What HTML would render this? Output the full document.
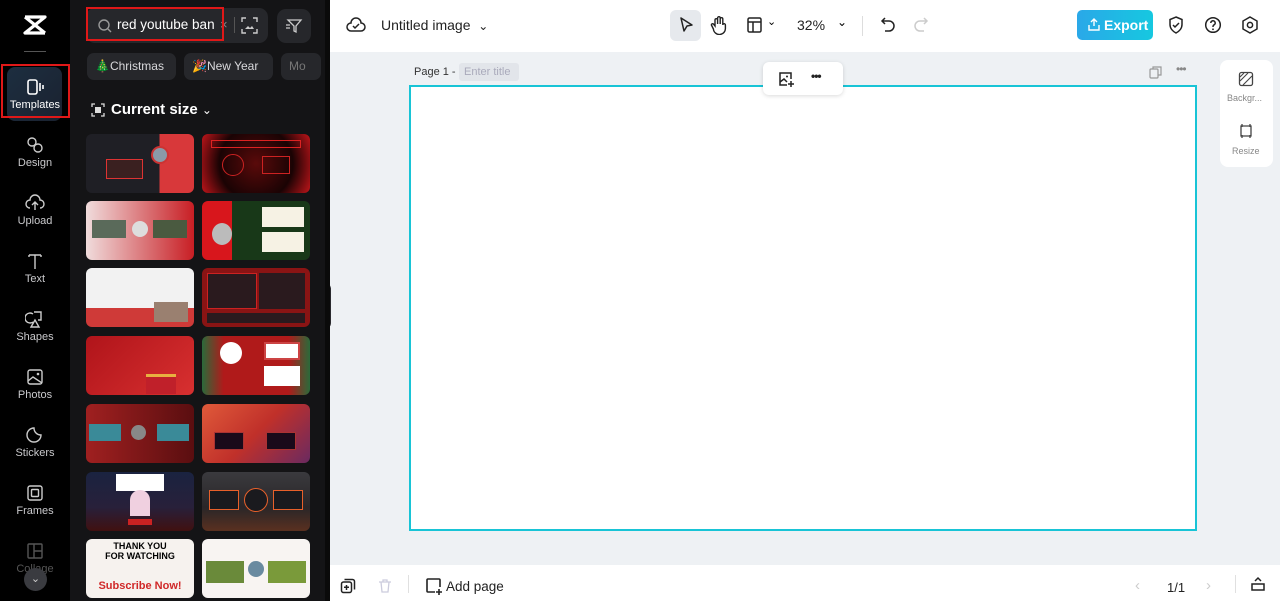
<!DOCTYPE html>
<html><head><meta charset="utf-8"><style>
*{box-sizing:border-box;margin:0;padding:0}
body{width:1280px;height:601px;overflow:hidden;font-family:"Liberation Sans",sans-serif;background:#eef1f4;position:relative}
.abs{position:absolute}
#side{left:0;top:0;width:70px;height:601px;background:#000}
.nav{position:absolute;left:0;width:70px;text-align:center;color:#c9c9cc;font-size:11px}
.nav svg{display:block;margin:0 auto 3px}
#panel{left:70px;top:0;width:256px;height:601px;background:#141416}
.chip{position:absolute;top:53px;height:27px;border-radius:7px;background:#26272b;color:#d9d9dc;font-size:12px;line-height:27px;padding-left:8px}
.th{position:absolute;width:108px;height:59px;border-radius:6px;overflow:hidden}
.th i{position:absolute;display:block}
#top{left:326px;top:0;width:954px;height:52px;background:#fff}
#bot{left:326px;top:565px;width:954px;height:36px;background:#fff}
.ic{position:absolute}
</style></head><body>
<div id="side" class="abs">
 <svg class="ic" style="left:22px;top:14px" width="26" height="22" viewBox="0 0 26 22"><path d="M3 3h20L3 19h20M3 3l20 16" stroke="#fff" stroke-width="3.2" fill="none" stroke-linejoin="round"/></svg>
 <div class="abs" style="left:24px;top:51px;width:22px;height:1px;background:#555"></div>
 <div class="abs" style="left:7px;top:67px;width:55px;height:54px;border-radius:8px;background:linear-gradient(135deg,#1d2e40,#1a2230)"></div>
 <div class="abs" style="left:1px;top:64px;width:69px;height:54px;border:2px solid #e01818"></div>
 <div class="nav" style="top:78px;color:#fff"><svg width="20" height="18" viewBox="0 0 20 18"><rect x="3" y="2" width="9" height="14" rx="2" fill="none" stroke="#fff" stroke-width="1.6"/><path d="M15 5v8M18 7v4" stroke="#fff" stroke-width="1.6"/></svg>Templates</div>
 <div class="nav" style="top:136px"><svg width="20" height="18" viewBox="0 0 20 18"><circle cx="7" cy="6" r="4" fill="none" stroke="#ccc" stroke-width="1.4"/><circle cx="13" cy="12" r="4" fill="none" stroke="#ccc" stroke-width="1.4"/></svg>Design</div>
 <div class="nav" style="top:194px"><svg width="20" height="18" viewBox="0 0 20 18"><path d="M5 14a4 4 0 0 1 0-8 5 5 0 0 1 10 0 4 4 0 0 1 0 8M10 16V8M7 11l3-3 3 3" fill="none" stroke="#ccc" stroke-width="1.4"/></svg>Upload</div>
 <div class="nav" style="top:252px"><svg width="20" height="18" viewBox="0 0 20 18"><path d="M4 3h12M10 3v14M4 3v2M16 3v2" fill="none" stroke="#ccc" stroke-width="1.4"/></svg>Text</div>
 <div class="nav" style="top:310px"><svg width="20" height="18" viewBox="0 0 20 18"><path d="M8 4a5 5 0 1 0 0 8M9 2h7v8h-3M6 17l4-7 4 7z" fill="none" stroke="#ccc" stroke-width="1.4"/></svg>Shapes</div>
 <div class="nav" style="top:368px"><svg width="20" height="18" viewBox="0 0 20 18"><rect x="3" y="2" width="14" height="14" rx="2" fill="none" stroke="#ccc" stroke-width="1.4"/><path d="M3 13l5-4 9 6" fill="none" stroke="#ccc" stroke-width="1.4"/><circle cx="13" cy="6" r="1.3" fill="#ccc"/></svg>Photos</div>
 <div class="nav" style="top:426px"><svg width="20" height="18" viewBox="0 0 20 18"><path d="M16 9a7 7 0 1 1-7-7c0 4 3 7 7 7z" fill="none" stroke="#ccc" stroke-width="1.4"/></svg>Stickers</div>
 <div class="nav" style="top:484px"><svg width="20" height="18" viewBox="0 0 20 18"><rect x="3" y="2" width="14" height="14" rx="2" fill="none" stroke="#ccc" stroke-width="1.4"/><rect x="6.5" y="5.5" width="7" height="7" rx="1" fill="none" stroke="#ccc" stroke-width="1.4"/></svg>Frames</div>
 <div class="nav" style="top:542px;color:#555"><svg width="20" height="18" viewBox="0 0 20 18"><rect x="3" y="2" width="14" height="14" rx="1" fill="none" stroke="#555" stroke-width="1.4"/><path d="M9 2v14M9 9h8" stroke="#555" stroke-width="1.4"/></svg>Collage</div>
 <div class="abs" style="left:24px;top:568px;width:23px;height:23px;border-radius:50%;background:#3a3b40;color:#ccc;font-size:11px;text-align:center;line-height:22px">&#8964;</div>
</div>
<div id="panel" class="abs">
 <div class="abs" style="left:16px;top:8px;width:182px;height:35px;border-radius:9px;background:#26272b"></div>
 <svg class="ic" style="left:27px;top:18px" width="16" height="16" viewBox="0 0 16 16"><circle cx="7" cy="7" r="5" fill="none" stroke="#999" stroke-width="1.4"/><path d="M11 11l3 3" stroke="#999" stroke-width="1.4"/></svg>
 <div class="abs" style="left:47px;top:17px;color:#fff;font-size:13.5px">red youtube ban</div>
 <div class="abs" style="left:150px;top:17px;color:#888;font-size:13px">×</div>
 <div class="abs" style="left:164px;top:17px;width:1px;height:16px;background:#555"></div>
 <svg class="ic" style="left:171px;top:17px" width="17" height="17" viewBox="0 0 17 17"><path d="M1 5V1h4M12 1h4v4M16 12v4h-4M5 16H1v-4" fill="none" stroke="#ccc" stroke-width="1.4"/><path d="M4 12l3-3 2 2 2-2 2 3z" fill="#ccc"/></svg>
 <div class="abs" style="left:16px;top:7px;width:138px;height:34px;border:2px solid #e01818"></div>
 <div class="abs" style="left:207px;top:9px;width:34px;height:34px;border-radius:9px;background:#26272b"></div>
 <svg class="ic" style="left:215px;top:17px" width="18" height="18" viewBox="0 0 18 18"><path d="M3 3h13l-5 6v6l-2-1V9z M1 8h4M1 11h4" fill="none" stroke="#ccc" stroke-width="1.3"/></svg>
 <div class="chip" style="left:17px;width:89px">🎄Christmas</div>
 <div class="chip" style="left:114px;width:89px">🎉New Year</div>
 <div class="chip" style="left:211px;width:40px;color:#777">Mo</div>
 <svg class="ic" style="left:21px;top:103px" width="14" height="14" viewBox="0 0 14 14"><path d="M1 4V1h3M10 1h3v3M13 10v3h-3M4 13H1v-3" fill="none" stroke="#ddd" stroke-width="1.3"/><rect x="4" y="4" width="6" height="6" fill="#ddd"/></svg>
 <div class="abs" style="left:41px;top:101px;color:#fff;font-size:15px;font-weight:bold">Current size <span style="font-weight:normal;font-size:12px">&#8964;</span></div>
 <div class="th" style="left:16px;top:134px;background:linear-gradient(90deg,#1f1f25 0 68%,#d8383a 68%)"><i style="left:20px;top:25px;width:37px;height:20px;background:#3a2020;border:1px solid #d33"></i><i style="left:65px;top:12px;width:18px;height:18px;border-radius:50%;background:#8a9aa8;border:2px solid #c33"></i></div>
 <div class="th" style="left:132px;top:134px;background:radial-gradient(circle at 50% 50%,#5a0a0a,#1a0304 60%,#c0151a)"><i style="left:9px;top:6px;width:90px;height:8px;border:1px solid #d22"></i><i style="left:20px;top:20px;width:22px;height:22px;border-radius:50%;border:1px solid #c22"></i><i style="left:60px;top:22px;width:28px;height:18px;border:1px solid #c22"></i></div>
 <div class="th" style="left:16px;top:201px;background:linear-gradient(90deg,#f0dcdc,#c81e24)"><i style="left:6px;top:19px;width:34px;height:18px;background:#5a6a5a"></i><i style="left:67px;top:19px;width:34px;height:18px;background:#4a5a40"></i><i style="left:46px;top:20px;width:16px;height:16px;border-radius:50%;background:#ddd"></i></div>
 <div class="th" style="left:132px;top:201px;background:linear-gradient(90deg,#d8161c 0 28%,#183818 28%)"><i style="left:60px;top:6px;width:42px;height:20px;background:#f6f2e4"></i><i style="left:60px;top:31px;width:42px;height:20px;background:#f6f2e4"></i><i style="left:10px;top:22px;width:20px;height:22px;border-radius:50%;background:#bbb"></i></div>
 <div class="th" style="left:16px;top:268px;background:linear-gradient(180deg,#f2f2f2 0 68%,#cf3a38 68%)"><i style="left:68px;top:34px;width:34px;height:20px;background:#9a8070"></i></div>
 <div class="th" style="left:132px;top:268px;background:#8a1414"><i style="left:5px;top:5px;width:50px;height:36px;background:#2a1a1e;border:1px solid #c22"></i><i style="left:57px;top:5px;width:46px;height:36px;background:#2a1a1e"></i><i style="left:5px;top:45px;width:98px;height:10px;background:#2a1a1e"></i></div>
 <div class="th" style="left:16px;top:336px;background:linear-gradient(135deg,#b0141a,#d83030)"><i style="left:60px;top:38px;width:30px;height:20px;background:#c0202a;border-top:3px solid #e8b040"></i></div>
 <div class="th" style="left:132px;top:336px;background:linear-gradient(90deg,#2b6a3a,#b01a1a 20%,#b01a1a 80%,#2b6a3a)"><i style="left:18px;top:6px;width:22px;height:22px;border-radius:50%;background:#fff"></i><i style="left:62px;top:6px;width:36px;height:18px;background:#fff;border:2px solid #c44"></i><i style="left:62px;top:30px;width:36px;height:20px;background:#fff"></i></div>
 <div class="th" style="left:16px;top:404px;background:linear-gradient(90deg,#a02020,#5a0e10)"><i style="left:3px;top:20px;width:32px;height:17px;background:#3a8a98"></i><i style="left:71px;top:20px;width:32px;height:17px;background:#3a8a98"></i><i style="left:45px;top:21px;width:15px;height:15px;border-radius:50%;background:#888"></i></div>
 <div class="th" style="left:132px;top:404px;background:linear-gradient(135deg,#e05a3a,#c0302a 50%,#6a2a60)"><i style="left:12px;top:28px;width:30px;height:18px;background:#1a0a1a;border:1px solid #a33"></i><i style="left:64px;top:28px;width:30px;height:18px;background:#1a0a1a;border:1px solid #a33"></i></div>
 <div class="th" style="left:16px;top:472px;background:linear-gradient(180deg,#1a2340,#28203a 60%,#401010)"><i style="left:30px;top:2px;width:48px;height:17px;background:#fff"></i><i style="left:44px;top:18px;width:20px;height:26px;border-radius:10px 10px 0 0;background:#f0d0e0"></i><i style="left:42px;top:47px;width:24px;height:6px;background:#c22"></i></div>
 <div class="th" style="left:132px;top:472px;background:linear-gradient(180deg,#3a3a3e,#2a2628 60%,#5a3020)"><i style="left:7px;top:18px;width:30px;height:20px;background:#1a1a1e;border:1px solid #e8602a"></i><i style="left:42px;top:16px;width:24px;height:24px;border-radius:50%;background:#1a1a1e;border:1px solid #e8602a"></i><i style="left:71px;top:18px;width:30px;height:20px;background:#1a1a1e;border:1px solid #e8602a"></i></div>
 <div class="th" style="left:16px;top:539px;background:#f6f2ee"><div style="position:absolute;left:0;right:0;bottom:4px;height:14px;text-align:center;color:#d02828;font-size:11px;font-weight:bold">Subscribe Now!</div><div style="position:absolute;top:2px;width:100%;text-align:center;font-size:9px;font-weight:bold">THANK YOU<br>FOR WATCHING</div></div>
 <div class="th" style="left:132px;top:539px;background:#f8f4f2"><div style="position:absolute;left:4px;top:22px;width:38px;height:22px;background:#6a8a3a"></div><div style="position:absolute;right:4px;top:22px;width:38px;height:22px;background:#7a9a3a"></div><i style="left:46px;top:22px;width:16px;height:16px;border-radius:50%;background:#6a8aa0"></i></div>
 <div class="abs" style="left:255px;top:283px;width:6px;height:46px;border-radius:0 6px 6px 0;background:#2a2a2e"></div>
</div>
<div class="abs" style="left:325px;top:0;width:5px;height:601px;background:#0a0a0a"></div>
<div id="top" class="abs" style="left:330px;width:950px">
 <svg class="ic" style="left:16px;top:16px" width="20" height="18" viewBox="0 0 20 18"><path d="M5 15a4 4 0 0 1 0-8 5 5 0 0 1 10 0 4 4 0 0 1 0 8z M7 10l2 2 4-4" fill="none" stroke="#222" stroke-width="1.5"/></svg>
 <div class="abs" style="left:51px;top:17px;font-size:14px;color:#222">Untitled image &nbsp;<span style="font-size:12px">&#8964;</span></div>
 <div class="abs" style="left:340px;top:10px;width:31px;height:31px;border-radius:6px;background:#e6e9ed"></div>
 <svg class="ic" style="left:348px;top:16px" width="16" height="18" viewBox="0 0 16 18"><path d="M3 2l11 7-5 1-3 5z" fill="none" stroke="#222" stroke-width="1.5" stroke-linejoin="round"/></svg>
 <svg class="ic" style="left:380px;top:15px" width="18" height="20" viewBox="0 0 18 20"><path d="M5 11V5a1.3 1.3 0 0 1 2.6 0v4V3a1.3 1.3 0 0 1 2.6 0v6V4a1.3 1.3 0 0 1 2.6 0v6a1.3 1.3 0 0 1 2.6 0v3a6 6 0 0 1-12 1l-2-4a1.2 1.2 0 0 1 2-1z" fill="none" stroke="#222" stroke-width="1.4"/></svg>
 <svg class="ic" style="left:416px;top:16px" width="18" height="18" viewBox="0 0 18 18"><rect x="2" y="2" width="13" height="14" rx="1.5" fill="none" stroke="#222" stroke-width="1.5"/><path d="M2 6h13M7 6v10" stroke="#222" stroke-width="1.5"/></svg>
 <div class="abs" style="left:437px;top:15px;font-size:11px">&#8964;</div>
 <div class="abs" style="left:467px;top:17px;font-size:14px;color:#222">32%</div>
 <div class="abs" style="left:507px;top:15px;font-size:12px">&#8964;</div>
 <div class="abs" style="left:532px;top:16px;width:1px;height:20px;background:#ddd"></div>
 <svg class="ic" style="left:549px;top:16px" width="18" height="18" viewBox="0 0 18 18"><path d="M6 2L3 5l3 3M3 5h7a5 5 0 0 1 0 10H6" fill="none" stroke="#222" stroke-width="1.5"/></svg>
 <svg class="ic" style="left:582px;top:16px" width="18" height="18" viewBox="0 0 18 18"><path d="M12 2l3 3-3 3M15 5H8a5 5 0 0 0 0 10h4" fill="none" stroke="#ccc" stroke-width="1.5"/></svg>
 <div class="abs" style="left:747px;top:10px;width:76px;height:30px;border-radius:5px;background:linear-gradient(90deg,#2aa8e8,#16c8e0);color:#fff;font-size:14px;font-weight:bold;line-height:30px;padding-left:27px">Export</div>
 <svg class="ic" style="left:758px;top:17px" width="12" height="14" viewBox="0 0 12 14"><path d="M6 9V2M3 5l3-3 3 3M1 8v5h10V8" fill="none" stroke="#fff" stroke-width="1.4"/></svg>
 <svg class="ic" style="left:837px;top:15px" width="18" height="20" viewBox="0 0 18 20"><path d="M9 2l6 2.5v5c0 4-3 7-6 8.5-3-1.5-6-4.5-6-8.5v-5z M6 10l2 2 4-4" fill="none" stroke="#222" stroke-width="1.5"/></svg>
 <svg class="ic" style="left:874px;top:16px" width="18" height="18" viewBox="0 0 18 18"><circle cx="9" cy="9" r="7.3" fill="none" stroke="#222" stroke-width="1.5"/><path d="M6.8 7a2.2 2.2 0 1 1 3 2c-.8.4-.8 1-.8 2" fill="none" stroke="#222" stroke-width="1.5"/><circle cx="9" cy="13.3" r=".9" fill="#222"/></svg>
 <svg class="ic" style="left:911px;top:15px" width="18" height="20" viewBox="0 0 18 20"><path d="M9 2l7 4v8l-7 4-7-4V6z" fill="none" stroke="#222" stroke-width="1.5"/><circle cx="9" cy="10" r="2.6" fill="none" stroke="#222" stroke-width="1.5"/></svg>
</div>
<div class="abs" style="left:414px;top:66px;font-size:11px;color:#333">Page 1 -</div>
<div class="abs" style="left:459px;top:63px;width:60px;height:18px;border-radius:3px;background:#e2e5ea;color:#aab;font-size:11px;line-height:18px;padding-left:5px">Enter title</div>
<svg class="ic" style="left:1149px;top:66px" width="13" height="13" viewBox="0 0 13 13"><rect x="1" y="3" width="8" height="9" rx="1" fill="none" stroke="#999" stroke-width="1.2"/><path d="M4 3V1h8v8h-3" fill="none" stroke="#999" stroke-width="1.2"/></svg>
<div class="abs" style="left:1176px;top:62px;font-size:12px;color:#888;letter-spacing:-1px">•••</div>
<div class="abs" style="left:409px;top:85px;width:788px;height:446px;background:#fff;border:2px solid #18c4d6"></div>
<div class="abs" style="left:763px;top:62px;width:80px;height:33px;border-radius:6px;background:#fff;box-shadow:0 1px 4px rgba(0,0,0,.15)"></div>
<svg class="ic" style="left:777px;top:70px" width="18" height="18" viewBox="0 0 18 18"><path d="M10 15H3V3h11v6" fill="none" stroke="#222" stroke-width="1.5"/><path d="M3 12l4-3 3 3M14 11v6M11 14h6" fill="none" stroke="#222" stroke-width="1.5"/><circle cx="10" cy="6.5" r="1" fill="#222"/></svg>
<div class="abs" style="left:811px;top:69px;font-size:12px;color:#222;letter-spacing:-1px;font-weight:bold">•••</div>
<div class="abs" style="left:1220px;top:60px;width:53px;height:107px;border-radius:8px;background:#fff"></div>
<svg class="ic" style="left:1238px;top:71px" width="16" height="16" viewBox="0 0 16 16"><rect x="1.5" y="1.5" width="13" height="13" rx="2" fill="none" stroke="#444" stroke-width="1.3"/><path d="M2 10l8-8M5 14l9-9M2 6l4-4" stroke="#444" stroke-width="1.1"/></svg>
<div class="abs" style="left:1227px;top:93px;font-size:9px;color:#888">Backgr...</div>
<svg class="ic" style="left:1238px;top:123px" width="16" height="16" viewBox="0 0 16 16"><path d="M4 1v3M12 1v3M4 12v3M12 12v3M3 3h10v10H3z" fill="none" stroke="#444" stroke-width="1.3"/></svg>
<div class="abs" style="left:1232px;top:146px;font-size:9px;color:#888">Resize</div>
<div id="bot" class="abs" style="left:330px;width:950px">
 <svg class="ic" style="left:10px;top:13px" width="16" height="16" viewBox="0 0 16 16"><rect x="1.5" y="4" width="10" height="10.5" rx="2" fill="none" stroke="#222" stroke-width="1.5"/><path d="M4.5 1.5h8a2 2 0 0 1 2 2v8M6.5 7v5M4 9.3h5" fill="none" stroke="#222" stroke-width="1.5"/></svg>
 <svg class="ic" style="left:47px;top:13px" width="16" height="16" viewBox="0 0 16 16"><path d="M2 4h12M4 4l1 10h6l1-10M6 4V2h4v2" fill="none" stroke="#ccd" stroke-width="1.3"/></svg>
 <div class="abs" style="left:78px;top:10px;width:1px;height:18px;background:#e0e0e0"></div>
 <svg class="ic" style="left:95px;top:12px" width="18" height="18" viewBox="0 0 18 18"><path d="M10 15H3a1 1 0 0 1-1-1V3a1 1 0 0 1 1-1h11a1 1 0 0 1 1 1v7M14 12v6M11 15h6" fill="none" stroke="#222" stroke-width="1.6"/></svg>
 <div class="abs" style="left:116px;top:14px;font-size:13.5px;color:#222">Add page</div>
 <div class="abs" style="left:805px;top:12px;font-size:15px;color:#ccc">&#8249;</div>
 <div class="abs" style="left:837px;top:15px;font-size:13px;color:#222">1/1</div>
 <div class="abs" style="left:876px;top:12px;font-size:15px;color:#ccc">&#8250;</div>
 <div class="abs" style="left:905px;top:10px;width:1px;height:18px;background:#e0e0e0"></div>
 <svg class="ic" style="left:920px;top:11px" width="16" height="16" viewBox="0 0 16 16"><path d="M2 8h12v6H2z M5 5l3-3 3 3" fill="none" stroke="#222" stroke-width="1.5"/></svg>
</div>
</body></html>
